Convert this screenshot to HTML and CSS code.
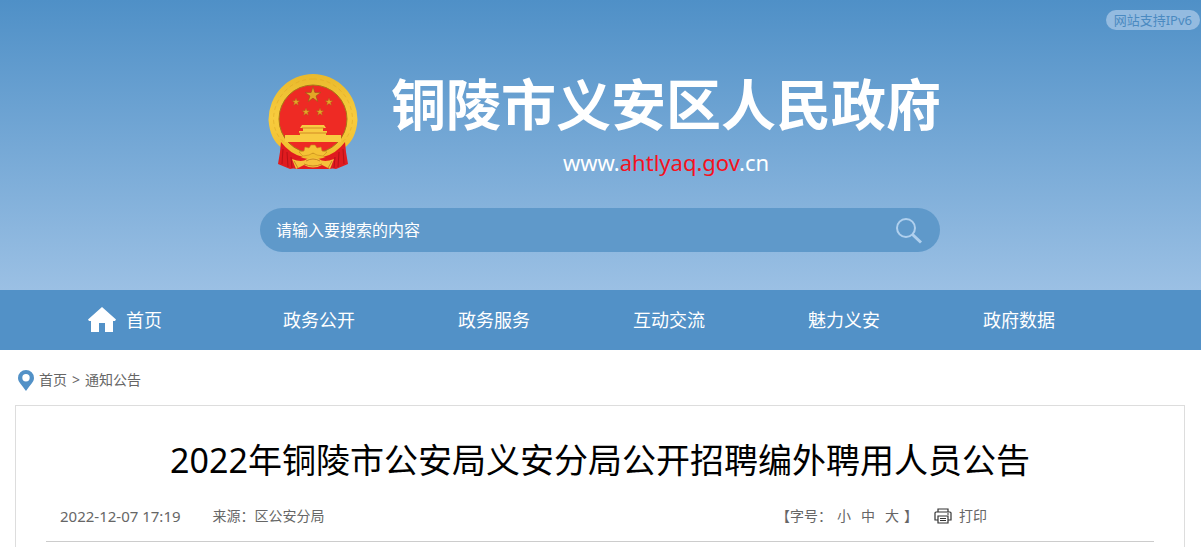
FILE: index.html
```html
<!DOCTYPE html>
<html lang="zh-CN">
<head>
<meta charset="utf-8">
<meta name="viewport" content="width=device-width, initial-scale=1">
<title>2022年铜陵市公安局义安分局公开招聘编外聘用人员公告</title>
<link rel="stylesheet" href="styles.css">
</head>
<body>
<header class="banner">
  <a class="ipv6" href="#">网站支持IPv6</a>
  <div class="brand">
    <svg class="emblem" viewBox="0 0 90 98" aria-hidden="true">
      <defs>
        <linearGradient id="gold" x1="0" y1="0" x2="0" y2="1">
          <stop offset="0" stop-color="#e9b92c"/><stop offset=".5" stop-color="#f8cc3e"/><stop offset="1" stop-color="#f0bd2d"/>
        </linearGradient>
        <path id="star" d="M0-10 2.3-3.1 9.5-3.1 3.7 1.2 5.9 8.1 0 3.8-5.9 8.1-3.7 1.2-9.5-3.1-2.3-3.1Z"/>
      </defs>
      <path d="M14 70h62v20l-14 5H28l-14-5z" fill="#e21d20"/>
      <path d="M45 0A44.500 46 0 0 1 89.500 46Q88 66 76 74q-9 8-21 10l-10 2-10-2Q23 82 14 74 2 66 .5 46A44.500 46 0 0 1 45 0z" fill="url(#gold)"/>
      <path d="M45 5A39.500 41 0 0 1 84.500 46q-1 14-10 22M45 5A39.500 41 0 0 0 5.500 46q1 14 10 22" fill="none" stroke="#dba522" stroke-dasharray="4 3" opacity=".5"/>
      <circle cx="45" cy="45" r="34" fill="#ee2a24" stroke="#a87817"/>
      <g fill="#e3a626" stroke="#9e5419" stroke-width=".8">
        <use href="#star" transform="translate(45 21) scale(.82)"/>
        <use href="#star" transform="translate(28 28) scale(.42)"/>
        <use href="#star" transform="translate(61 28) scale(.42)"/>
        <use href="#star" transform="translate(38 38) scale(.42)"/>
        <use href="#star" transform="translate(52 38) scale(.42)"/>
      </g>
      <path d="M34 51h22l2 3H32zM35 54h20v3H35zM31 57h28v2H31zM32 59h26v2H32zM17 61h56v7H17z" fill="#f8cb42"/>
      <path d="M34 54h22M31 59h28" stroke="#c97b20" stroke-width=".8"/>
      <path d="M13 68q9 12 22 15l-9 3 2 8-6 1-12-5 2-12zM77 68q-9 12-22 15l9 3-2 8 6 1 12-5-2-12z" fill="#e01b1f"/>
      <path d="M15 75l-1 15M19 78l1 15M23 83l1 11M75 75l1 15M71 78l-1 15M67 83l-1 11" stroke="#9c0d13" opacity=".6"/>
      <path d="M31 78l5-1 1-4 4 1 2-3h4l2 3 4-1 1 4 5 1-4 4-6-1-4-2-4 2-6 1z" fill="#f5c236" stroke="#c88a1c" stroke-width=".6"/>
      <path d="M24 85q10 4 15 0 6-3 12 0 5 4 15 0l-4 10-8-4q-9 5-18 0l-8 4z" fill="#f6c23c"/>
      <path d="M38 87q7-4 14 0M36 90q9 4 18 0M26 87l4 7M64 87l-4 7" fill="none" stroke="#bc741b" stroke-width=".8"/>
    </svg>
    <div class="wordmark">
      <div class="site-name">铜陵市义安区人民政府</div>
      <div class="site-url">www.<span class="domain">ahtlyaq.gov</span>.cn</div>
    </div>
  </div>
  <form class="search" role="search">
    <input class="search-input" type="text" aria-label="搜索" placeholder="请输入要搜索的内容">
    <button class="search-button" type="button" aria-label="搜索">
      <svg class="search-icon" viewBox="0 0 28 28" aria-hidden="true"><circle cx="11" cy="12" r="9" fill="none" stroke="currentColor" stroke-width="2"/><path d="M17.500 18.500 26 26.500" stroke="currentColor" stroke-width="3"/></svg>
    </button>
  </form>
</header>
<nav class="nav">
  <div class="nav-inner">
    <a class="nav-link home" href="#"><svg class="home-icon" viewBox="0 0 28 26" aria-hidden="true"><path d="M14 0 28 12.500 27 14H25V25H17V16H11V25H3V14H1L0 12.500Z" fill="currentColor"/></svg>首页</a>
    <a class="nav-link" href="#">政务公开</a>
    <a class="nav-link" href="#">政务服务</a>
    <a class="nav-link" href="#">互动交流</a>
    <a class="nav-link" href="#">魅力义安</a>
    <a class="nav-link" href="#">政府数据</a>
  </div>
</nav>
<main class="page">
  <div class="crumbs">
    <svg class="pin" viewBox="0 0 16 21" aria-hidden="true"><path fill-rule="evenodd" d="M8 0a8 8 0 0 1 8 8c0 4-4 7-8 13C4 15 0 12 0 8a8 8 0 0 1 8-8zm0 4a3.700 3.700 0 1 0 0 7.400A3.700 3.700 0 0 0 8 4z" fill="currentColor"/></svg>
    <a href="#">首页</a><span>&gt;</span><a href="#">通知公告</a>
  </div>
  <article class="article">
    <h1 class="title">2022年铜陵市公安局义安分局公开招聘编外聘用人员公告</h1>
    <div class="meta">
      <div class="source"><time class="date">2022-12-07 17:19</time><span>来源：区公安分局</span></div>
      <div class="tools">
        <div class="sizes"><span>【字号：</span><div class="size-buttons"><button class="tool" type="button">小</button><button class="tool" type="button">中</button><button class="tool" type="button">大</button></div><span>】</span></div>
        <button class="tool print" type="button"><svg class="print-icon" viewBox="0 0 18 16" aria-hidden="true"><path d="M4 4V1h10v3M4 12H1V5q0-1 1-1h14q1 0 1 1v7h-3M4 8h10v7H4zM6 10.500h6M6 12.500h6M13 6h2" fill="none" stroke="currentColor" stroke-width="1.200"/></svg>打印</button>
      </div>
    </div>
  </article>
</main>
</body>
</html>
```
FILE: styles.css
```css
* { box-sizing: border-box; }
body {
  margin: 0;
  background: #fff;
  color: #666;
  font: 14px/20px "Noto Sans", "Noto Sans CJK SC", sans-serif;
}
a { color: inherit; text-decoration: none; }
button, input { border: 0; padding: 0; background: none; font: inherit; color: inherit; }
button { cursor: pointer; }
svg { display: block; flex: none; }

.banner {
  position: relative;
  display: flex;
  flex-direction: column;
  align-items: center;
  padding: 70px 17px 38px 16px;
  background: linear-gradient(#4f90c7, #9bc0e4);
}
.ipv6 {
  position: absolute;
  top: 10px;
  right: 1px;
  padding: 0 8px;
  border-radius: 10px;
  background: #94bbe0;
  color: #4b8ac1;
  font-size: 13px;
}
.brand { display: flex; gap: 33px; height: 138px; padding-left: 9px; }
.emblem { width: 90px; height: 98px; margin-top: 4px; }
.site-name {
  color: #fff;
  font-size: 55px;
  font-weight: 700;
  line-height: 68px;
  white-space: nowrap;
}
.site-url {
  color: #fff;
  font-size: 22px;
  line-height: 28px;
  margin-top: 10px;
  text-align: center;
}
.domain { color: #f5121d; }

.search {
  display: flex;
  align-items: center;
  width: 100%;
  max-width: 680px;
  height: 44px;
  padding: 0 17px 0 16px;
  border-radius: 22px;
  background: #5f99ca;
  color: #fff;
}
.search-input { flex: 1; min-width: 0; height: 44px; font-size: 16px; outline: 0; }
.search-input::placeholder { color: #fff; opacity: 1; }
.search-button { color: #b0d0ee; }
.search-icon { width: 28px; height: 28px; }

.nav { background: #5291c7; color: #fff; }
.nav-inner {
  display: grid;
  grid-template-columns: repeat(6, 175px);
  max-width: 1170px;
  margin: 0 auto;
  padding-left: 41px;
}
.nav-link { display: flex; align-items: center; justify-content: center; height: 60px; font-size: 18px; }
.home { gap: 10px; padding-right: 38px; }
.home-icon { width: 28px; height: 26px; }

.page { padding: 0 16px 0 15px; }
.crumbs { display: flex; align-items: center; gap: 5px; height: 55px; padding: 5px 3px 0; }
.pin { width: 16px; height: 21px; color: #5291c7; }
.article { padding: 29px 30px 6px; border: 1px solid #ddd; border-bottom: 0; }
.title { margin: 0; color: #000; font-size: 34px; font-weight: 400; line-height: 50px; text-align: center; }
.meta {
  display: flex;
  justify-content: space-between;
  padding: 21px 167px 15px 14px;
  border-bottom: 1px solid #ccc;
}
.source { display: flex; gap: 32px; }
.date { font-size: 15px; }
.tools { display: flex; gap: 16px; }
.sizes { display: flex; gap: 5px; }
.size-buttons { display: flex; gap: 10px; }
.print { display: flex; align-items: center; gap: 7px; }
.print-icon { width: 18px; height: 16px; color: #333; }
```
